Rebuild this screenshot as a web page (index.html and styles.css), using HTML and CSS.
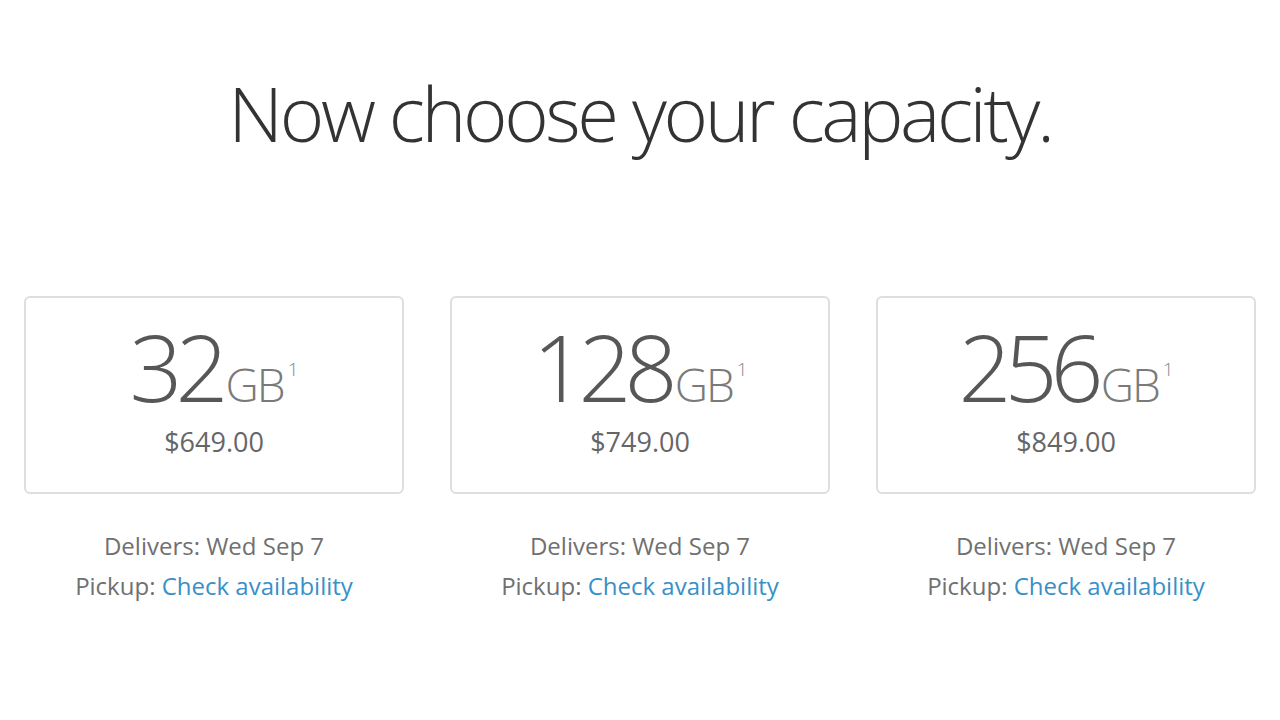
FILE: index.html
```html
<!DOCTYPE html>
<html>
<head>
<meta charset="utf-8">
<link rel="stylesheet" href="styles.css">
</head>
<body>
<main class="page">
  <h1 class="title">Now choose your capacity.</h1>
  <div class="options">
    <div class="option">
      <div class="card">
        <div class="size"><span class="num">32</span><span class="unit">GB</span><sup class="fn">1</sup></div>
        <div class="price">$649.00</div>
      </div>
      <div class="info">
        <div>Delivers: Wed Sep 7</div>
        <div>Pickup: <a class="link">Check availability</a></div>
      </div>
    </div>
    <div class="option">
      <div class="card">
        <div class="size"><span class="num">128</span><span class="unit">GB</span><sup class="fn">1</sup></div>
        <div class="price">$749.00</div>
      </div>
      <div class="info">
        <div>Delivers: Wed Sep 7</div>
        <div>Pickup: <a class="link">Check availability</a></div>
      </div>
    </div>
    <div class="option">
      <div class="card">
        <div class="size"><span class="num">256</span><span class="unit">GB</span><sup class="fn">1</sup></div>
        <div class="price">$849.00</div>
      </div>
      <div class="info">
        <div>Delivers: Wed Sep 7</div>
        <div>Pickup: <a class="link">Check availability</a></div>
      </div>
    </div>
  </div>
</main>
</body>
</html>
```
FILE: styles.css
```css
html, body {
  margin: 0;
  padding: 0;
  background: #ffffff;
}
body {
  width: 1280px;
  height: 720px;
  overflow: hidden;
  font-family: "Open Sans", "DejaVu Sans", sans-serif;
}
.page {
  padding: 58px 24px 0 24px;
}
.title {
  margin: 0;
  text-align: center;
  font-size: 76px;
  font-weight: 300;
  line-height: 110px;
  color: #333333;
  letter-spacing: -3.4px;
}
.options {
  margin-top: 128px;
  display: flex;
  gap: 46px;
}
.option {
  width: 380px;
  display: flex;
  flex-direction: column;
  align-items: center;
}
.card {
  box-sizing: border-box;
  width: 380px;
  height: 198px;
  border: 2px solid #dedede;
  border-radius: 6px;
  display: flex;
  flex-direction: column;
  align-items: center;
  padding-top: 24px;
}
.size {
  display: flex;
  align-items: baseline;
  line-height: 88px;
  color: #575757;
}
.num {
  font-size: 93px;
  font-weight: 300;
  letter-spacing: -7px;
}
.unit {
  font-size: 46px;
  font-weight: 300;
  color: #7a7a7a;
  letter-spacing: -2px;
  margin-left: 4px;
}
.fn {
  font-size: 19px;
  font-weight: 300;
  color: #888888;
  align-self: flex-start;
  line-height: 1;
  margin-top: 38px;
  margin-left: 4px;
}
.price {
  margin-top: 0;
  font-size: 27px;
  line-height: 28px;
  color: #666666;
}
.info {
  margin-top: 32px;
  text-align: center;
  font-size: 24px;
  line-height: 40px;
  color: #707070;
}
.link {
  color: #3a8fc6;
  text-decoration: none;
}
```
